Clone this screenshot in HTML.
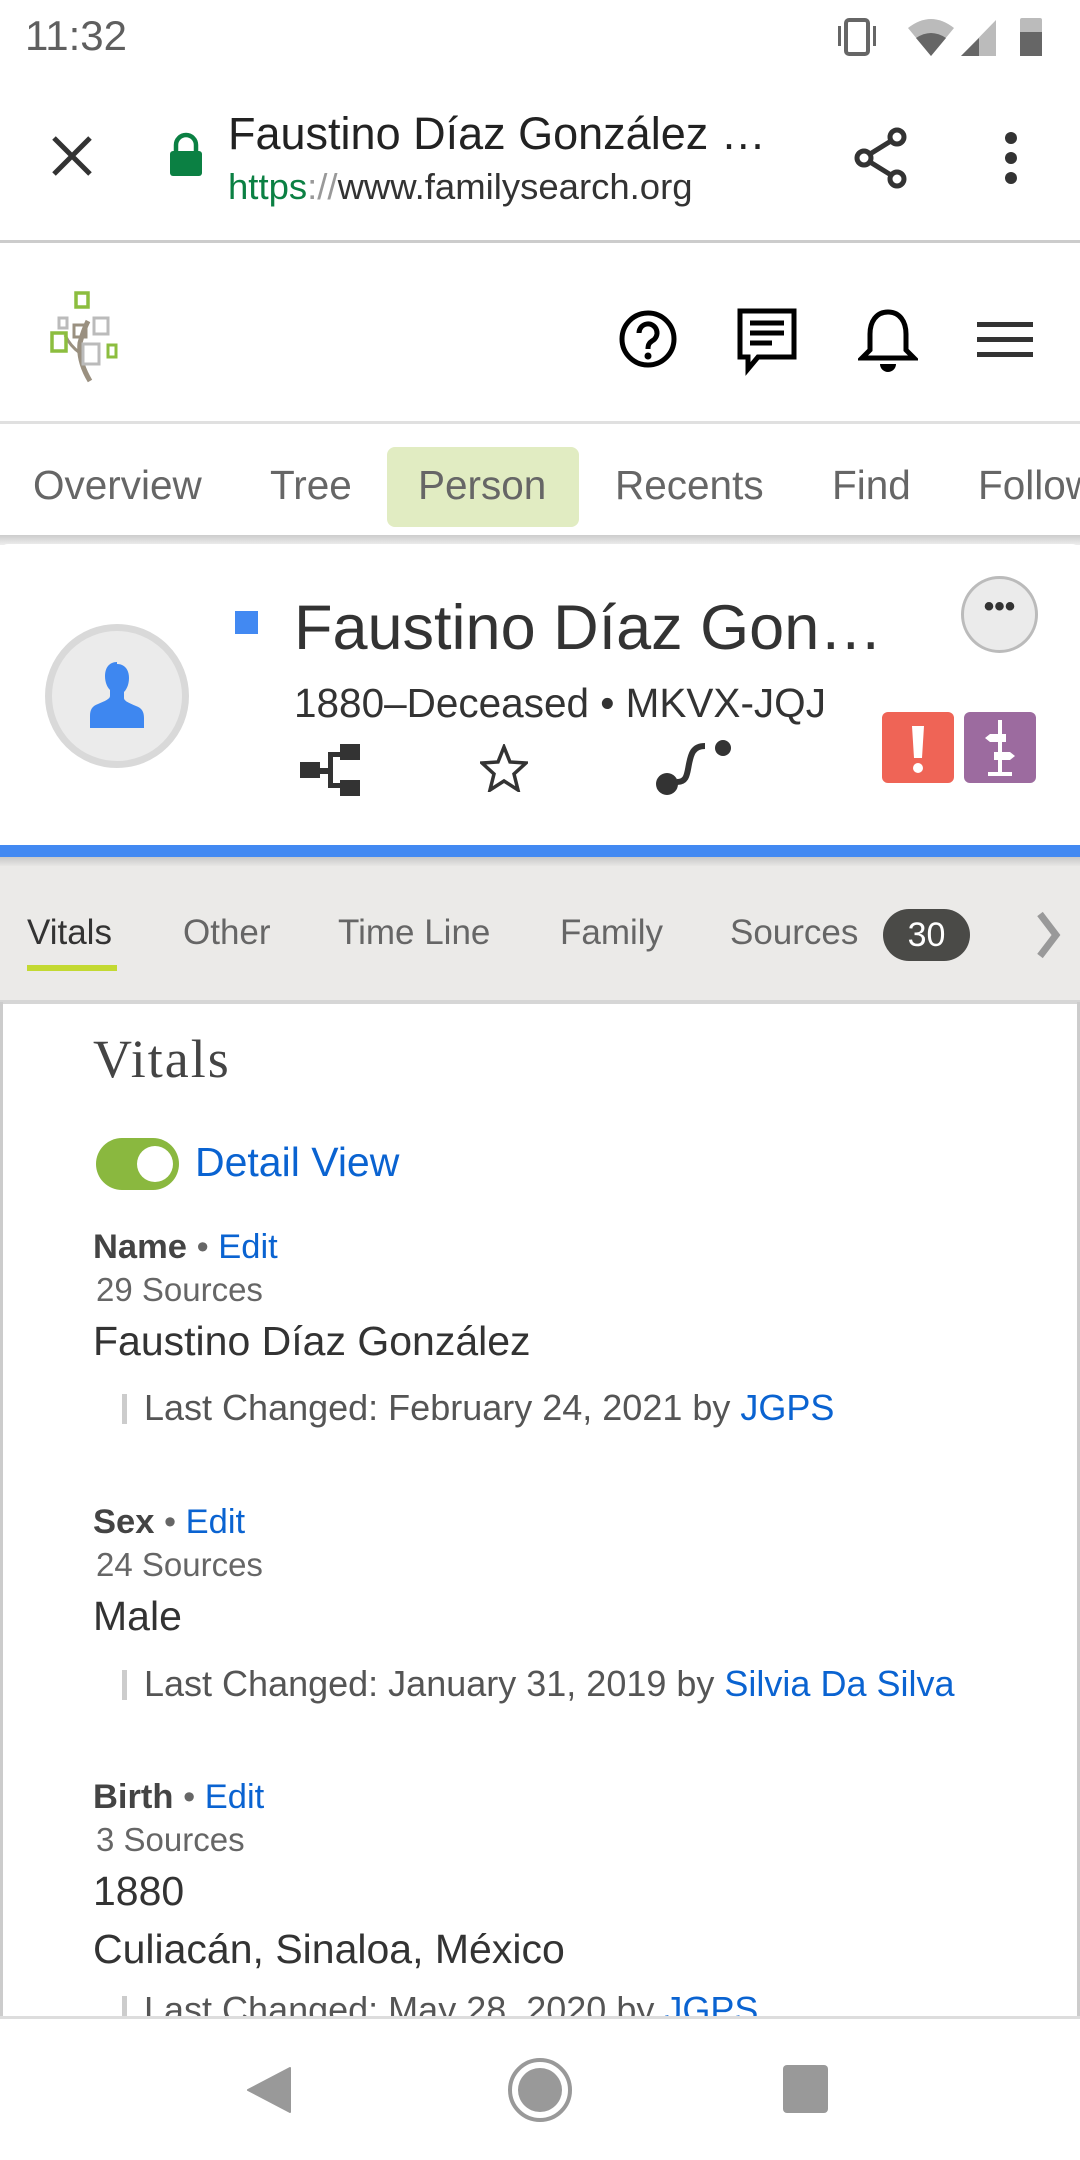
<!DOCTYPE html>
<html><head><meta charset="utf-8"><style>
*{margin:0;padding:0;box-sizing:border-box}
body{width:1080px;height:2160px;position:relative;overflow:hidden;background:#fff;font-family:"Liberation Sans",sans-serif;color:#333}
.a{position:absolute;white-space:nowrap}
.blue{color:#0a63d1}
</style></head><body>
<!-- status bar -->
<div class="a" style="left:25px;top:12px;font-size:42px;color:#5f5f5f">11:32</div>
<svg class="a" style="left:836px;top:14px" width="210" height="44" viewBox="0 0 210 44">
<rect x="10" y="6" width="22" height="34" rx="3" fill="none" stroke="#666" stroke-width="4"/>
<rect x="2" y="12" width="3" height="20" fill="#666"/><rect x="37" y="12" width="3" height="20" fill="#666"/>
<path d="M72 14 Q95 -4 118 14 L95 42 Z" fill="#bbb"/><path d="M80 24 Q95 14 110 24 L95 42 Z" fill="#666"/>
<path d="M160 6 L160 42 L125 42 Z" fill="#bbb"/><path d="M143 24 L143 42 L125 42 Z" fill="#666"/>
<rect x="184" y="4" width="22" height="38" rx="2" fill="#bbb"/><rect x="184" y="18" width="22" height="24" fill="#666"/>
</svg>
<!-- chrome bar -->
<svg class="a" style="left:50px;top:134px" width="44" height="44" viewBox="0 0 44 44"><path d="M4 4L40 40M40 4L4 40" stroke="#333" stroke-width="5"/></svg>
<svg class="a" style="left:168px;top:132px" width="36" height="46" viewBox="0 0 36 46"><path d="M8 20V13a10 10 0 0 1 20 0v7" fill="none" stroke="#0b8043" stroke-width="4.5"/><rect x="2" y="19" width="32" height="25" rx="3" fill="#0b8043"/></svg>
<div class="a" style="left:228px;top:108px;font-size:45px;color:#222">Faustino Díaz González …</div>
<div class="a" style="left:228px;top:166px;font-size:36.5px;color:#333"><span style="color:#0b8043">https</span><span style="color:#999">://</span>www.familysearch.org</div>
<svg class="a" style="left:852px;top:126px" width="60" height="64" viewBox="0 0 60 64"><g fill="none" stroke="#333" stroke-width="5"><circle cx="45" cy="11" r="7"/><circle cx="12" cy="32" r="7"/><circle cx="45" cy="53" r="7"/><path d="M18 28L39 15M18 36L39 49"/></g></svg>
<svg class="a" style="left:998px;top:130px" width="28" height="56"><circle cx="13" cy="8" r="6" fill="#333"/><circle cx="13" cy="28" r="6" fill="#333"/><circle cx="13" cy="48" r="6" fill="#333"/></svg>
<div class="a" style="left:0;top:240px;width:1080px;height:3px;background:#ccc"></div>
<!-- site header -->
<svg class="a" style="left:50px;top:290px" width="72" height="94" viewBox="0 0 72 92">
<path d="M40 90 Q28 70 30 52 Q33 40 38 30" fill="none" stroke="#9a9080" stroke-width="5"/>
<path d="M30 62 Q20 55 15 44" fill="none" stroke="#9a9080" stroke-width="3"/>
<rect x="26" y="2" width="12" height="14" fill="none" stroke="#8cbd3f" stroke-width="3.5"/>
<rect x="9" y="27" width="8" height="10" fill="none" stroke="#bbb" stroke-width="3"/>
<rect x="24" y="34" width="12" height="12" fill="none" stroke="#9a9080" stroke-width="3"/>
<rect x="44" y="27" width="14" height="16" fill="none" stroke="#bbb" stroke-width="3"/>
<rect x="2" y="42" width="14" height="18" fill="none" stroke="#8cbd3f" stroke-width="3.5"/>
<rect x="33" y="53" width="16" height="20" fill="none" stroke="#bbb" stroke-width="3"/>
<rect x="58" y="54" width="8" height="12" fill="none" stroke="#8cbd3f" stroke-width="3"/>
</svg>
<svg class="a" style="left:617px;top:307px" width="62" height="64" viewBox="0 0 62 64"><circle cx="31" cy="32" r="26" fill="none" stroke="#000" stroke-width="5"/><path d="M22 26a9 9 0 1 1 13 8c-3 2-4 4-4 8" fill="none" stroke="#000" stroke-width="5"/><circle cx="31" cy="49" r="3.5"/></svg>
<svg class="a" style="left:736px;top:307px" width="62" height="72" viewBox="0 0 62 72"><path d="M4 4H58V50H22L12 62V50H4Z" fill="none" stroke="#000" stroke-width="5"/><path d="M14 16H48M14 26H48M14 36H36" stroke="#000" stroke-width="5"/></svg>
<svg class="a" style="left:858px;top:308px" width="60" height="66" viewBox="0 0 60 66"><path d="M30 4c-12 0-18 10-18 22v16l-8 8h52l-8-8V26C48 14 42 4 30 4Z" fill="none" stroke="#000" stroke-width="5"/><path d="M22 56a8 8 0 0 0 16 0Z"/></svg>
<svg class="a" style="left:977px;top:320px" width="56" height="40"><rect y="2" width="56" height="5" fill="#333"/><rect y="17" width="56" height="5" fill="#333"/><rect y="32" width="56" height="5" fill="#333"/></svg>
<div class="a" style="left:0;top:421px;width:1080px;height:3px;background:#e0e0e0"></div>
<!-- nav tabs -->
<div class="a" style="left:387px;top:447px;width:192px;height:80px;border-radius:8px;background:#e1ecc2"></div>
<div class="a" style="left:33px;top:462px;font-size:40.5px;color:#666">Overview</div>
<div class="a" style="left:270px;top:462px;font-size:40.5px;color:#666">Tree</div>
<div class="a" style="left:418px;top:462px;font-size:40.5px;color:#666">Person</div>
<div class="a" style="left:615px;top:462px;font-size:40.5px;color:#666">Recents</div>
<div class="a" style="left:832px;top:462px;font-size:40.5px;color:#666">Find</div>
<div class="a" style="left:978px;top:462px;font-size:40.5px;color:#666">Follow</div>
<div class="a" style="left:0;top:535px;width:1080px;height:10px;background:linear-gradient(#ccc,#eee)"></div>
<!-- person card -->
<div class="a" style="left:0;top:544px;width:1080px;height:302px;background:#fff;border-radius:8px 8px 0 0"></div>
<div class="a" style="left:45px;top:624px;width:144px;height:144px;border-radius:50%;background:#ebebeb;border:7px solid #d9d9d9"></div>
<svg class="a" style="left:88px;top:660px" width="58" height="70" viewBox="0 0 58 70"><path d="M29 2c-8 0-12 6-12 14 0 6 2 11 5 14v6c0 3-5 5-12 8-6 2-8 6-8 12v12h54V58c0-6-2-10-8-12-7-3-12-5-12-8v-6c3-3 5-8 5-14 0-8-4-14-12-14Z" fill="#3e87f0"/></svg>
<div class="a" style="left:235px;top:611px;width:23px;height:23px;background:#4289f2"></div>
<div class="a" style="left:294px;top:592px;font-size:63px;color:#333">Faustino Díaz Gon…</div>
<div class="a" style="left:294px;top:680px;font-size:40.5px;color:#333">1880–Deceased • MKVX-JQJ</div>
<div class="a" style="left:961px;top:576px;width:77px;height:77px;border-radius:50%;background:#ebebeb;border:3px solid #bbb;text-align:center;font-size:30px;font-weight:bold;line-height:56px;color:#333">•••</div>
<svg class="a" style="left:300px;top:744px" width="62" height="52" viewBox="0 0 62 52"><g fill="#333"><rect x="0" y="18" width="20" height="16"/><rect x="40" y="0" width="20" height="16"/><rect x="40" y="36" width="20" height="16"/><path d="M20 24h8V8h12v5H33v26h7v5H28V30h-8Z"/></g></svg>
<svg class="a" style="left:480px;top:744px" width="48" height="48" viewBox="0 0 48 48"><path d="M24 3l6 15 16 1-12 11 4 16-14-9-14 9 4-16L2 19l16-1Z" fill="none" stroke="#333" stroke-width="3.5"/></svg>
<svg class="a" style="left:655px;top:738px" width="80" height="60" viewBox="0 0 80 60"><circle cx="12" cy="46" r="11" fill="#333"/><circle cx="68" cy="10" r="8" fill="#333"/><path d="M22 44c10 0 10-8 12-18s4-18 16-18" fill="none" stroke="#333" stroke-width="6"/></svg>
<div class="a" style="left:882px;top:712px;width:72px;height:71px;border-radius:6px;background:#ef6456"></div>
<svg class="a" style="left:882px;top:712px" width="72" height="71"><path d="M30 14h12l-2 32h-8Z" fill="#fff"/><circle cx="36" cy="56" r="5" fill="#fff"/></svg>
<div class="a" style="left:964px;top:712px;width:72px;height:71px;border-radius:6px;background:#9c6b9f"></div>
<svg class="a" style="left:964px;top:712px" width="72" height="71"><g fill="#fff"><rect x="34" y="8" width="4" height="54"/><path d="M26 22h16v8H26l-5-4Z"/><path d="M30 40h16l5 4-5 4H30Z"/><rect x="24" y="60" width="24" height="4"/></g></svg>
<div class="a" style="left:0;top:845px;width:1080px;height:12px;background:#4289f2"></div>
<div class="a" style="left:0;top:857px;width:1080px;height:10px;background:linear-gradient(#c8c8c8,#ebeae8)"></div>
<!-- tabs -->
<div class="a" style="left:0;top:866px;width:1080px;height:136px;background:#ebeae8"></div>
<div class="a" style="left:27px;top:913px;font-size:35px;color:#333">Vitals</div>
<div class="a" style="left:27px;top:965px;width:90px;height:6px;background:#c3d932"></div>
<div class="a" style="left:183px;top:913px;font-size:35px;color:#666">Other</div>
<div class="a" style="left:338px;top:913px;font-size:35px;color:#666">Time Line</div>
<div class="a" style="left:560px;top:913px;font-size:35px;color:#666">Family</div>
<div class="a" style="left:730px;top:913px;font-size:35px;color:#666">Sources</div>
<div class="a" style="left:883px;top:909px;width:87px;height:52px;border-radius:26px;background:#4a4a47;color:#fff;font-size:34px;text-align:center;line-height:52px">30</div>
<svg class="a" style="left:1034px;top:910px" width="30" height="50"><path d="M6 4L22 25L6 46" fill="none" stroke="#999" stroke-width="7"/></svg>
<!-- content -->
<div class="a" style="left:0;top:1000px;width:1080px;height:4px;background:#d6d6d6"></div>
<div class="a" style="left:0;top:1002px;width:3px;height:1020px;background:#ccc"></div>
<div class="a" style="left:1077px;top:1002px;width:3px;height:1020px;background:#ccc"></div>
<div class="a" style="left:93px;top:1028px;font-size:54px;letter-spacing:2px;font-family:'Liberation Serif',serif;color:#444">Vitals</div>
<div class="a" style="left:96px;top:1138px;width:83px;height:52px;border-radius:26px;background:#8ab83f"></div>
<div class="a" style="left:137px;top:1146px;width:36px;height:36px;border-radius:50%;background:#fff"></div>
<div class="a blue" style="left:195px;top:1139px;font-size:41px">Detail View</div>

<div class="a" style="left:93px;top:1228px;font-size:34.5px"><b style="color:#444">Name</b> <span style="color:#666">•</span> <span class="blue">Edit</span></div>
<div class="a" style="left:96px;top:1271px;font-size:33px;color:#666">29 Sources</div>
<div class="a" style="left:93px;top:1318px;font-size:41px;color:#333">Faustino Díaz González</div>
<div class="a" style="left:122px;top:1394px;width:5px;height:30px;background:#ccc"></div>
<div class="a" style="left:144px;top:1387px;font-size:36px;color:#555">Last Changed: February 24, 2021 by <span class="blue">JGPS</span></div>

<div class="a" style="left:93px;top:1503px;font-size:34.5px"><b style="color:#444">Sex</b> <span style="color:#666">•</span> <span class="blue">Edit</span></div>
<div class="a" style="left:96px;top:1546px;font-size:33px;color:#666">24 Sources</div>
<div class="a" style="left:93px;top:1593px;font-size:41px;color:#333">Male</div>
<div class="a" style="left:122px;top:1670px;width:5px;height:30px;background:#ccc"></div>
<div class="a" style="left:144px;top:1663px;font-size:36px;color:#555">Last Changed: January 31, 2019 by <span class="blue">Silvia Da Silva</span></div>

<div class="a" style="left:93px;top:1778px;font-size:34.5px"><b style="color:#444">Birth</b> <span style="color:#666">•</span> <span class="blue">Edit</span></div>
<div class="a" style="left:96px;top:1821px;font-size:33px;color:#666">3 Sources</div>
<div class="a" style="left:93px;top:1868px;font-size:41px;color:#333">1880</div>
<div class="a" style="left:93px;top:1926px;font-size:41px;color:#333">Culiacán, Sinaloa, México</div>
<div class="a" style="left:122px;top:1996px;width:5px;height:30px;background:#ccc"></div>
<div class="a" style="left:144px;top:1989px;font-size:36px;color:#555">Last Changed: May 28, 2020 by <span class="blue">JGPS</span></div>
<!-- nav bar -->
<div class="a" style="left:0;top:2016px;width:1080px;height:144px;background:#fff;border-top:3px solid #ddd"></div>
<svg class="a" style="left:246px;top:2066px" width="46" height="48"><path d="M44 2V46L2 24Z" fill="#999" stroke="#999" stroke-width="2" stroke-linejoin="round"/></svg>
<svg class="a" style="left:506px;top:2056px" width="68" height="68"><circle cx="34" cy="34" r="30" fill="none" stroke="#999" stroke-width="4"/><circle cx="34" cy="34" r="22" fill="#999"/></svg>
<div class="a" style="left:783px;top:2065px;width:45px;height:48px;border-radius:4px;background:#999"></div>
</body></html>
